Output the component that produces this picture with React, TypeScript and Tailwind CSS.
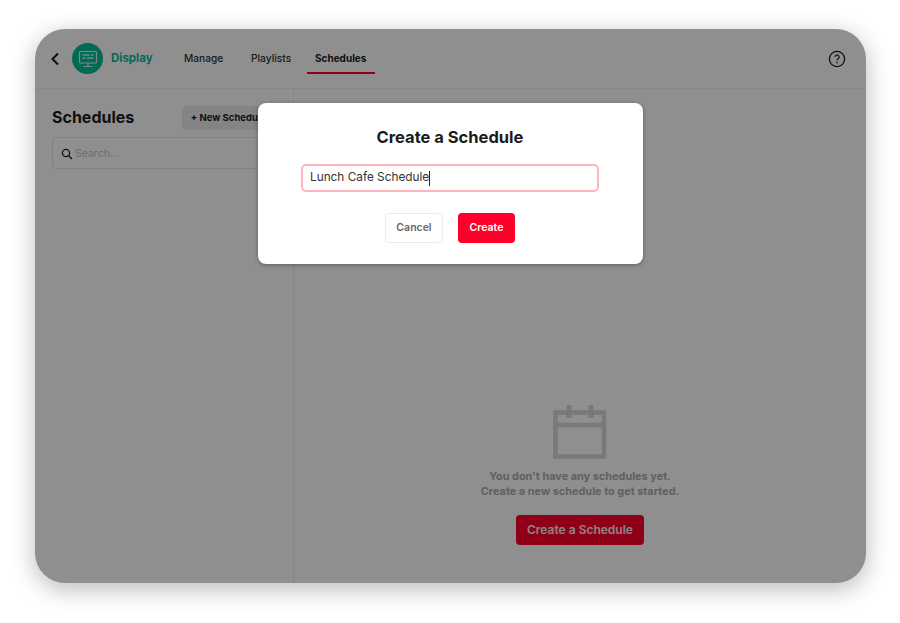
const font = "font-['Inter','Liberation_Sans',sans-serif]";

function CalendarIcon() {
  return (
    <svg width="54" height="54" viewBox="0 0 54 54" fill="none" stroke="#d8d8d8" strokeWidth="4.5">
      <rect x="2.5" y="7.5" width="48.5" height="44" />
      <path d="M2 20h49" />
      <path d="M16 0v13M38 0v13" strokeWidth="5" />
    </svg>
  );
}

function DisplayIcon() {
  return (
    <svg width="20" height="20" viewBox="0 0 20 20" fill="none" stroke="#d8f5ee" strokeWidth="1.2">
      <rect x="1.5" y="2.5" width="17" height="11.5" rx="1" />
      <path d="M10 14v3M5.5 17.5h9" />
      <path d="M4.5 6h7M13 6h2.5M4.5 9h3M9 9h6.5" strokeWidth="1.5" />
    </svg>
  );
}

function App() {
  return (
    <div className={`w-[900px] h-[623px] bg-white pt-[29px] pl-[35px] ${font}`}>
      <div className="relative w-[831px] h-[554px] rounded-[30px] overflow-hidden bg-white flex flex-col shadow-[0_6px_24px_rgba(0,0,0,0.28)]">
        <header className="h-[60px] shrink-0 border-b border-[#f0f0f0] flex items-center pl-[15px] pr-[20px]">
          <svg width="10" height="14" viewBox="0 0 10 14" fill="none" stroke="#1b1b1b" strokeWidth="2">
            <path d="M8 1.5 2.5 7 8 12.5" />
          </svg>
          <div className="w-[31px] h-[31px] ml-[12px] rounded-full bg-[#05bc98] flex items-center justify-center">
            <DisplayIcon />
          </div>
          <span className="ml-[8px] w-[42px] text-[11.5px] font-bold text-[#05bc98]">Display</span>
          <nav className="ml-[31px] flex items-center h-full text-[10.2px] font-medium text-[#333]">
            <span className="w-[40px]">Manage</span>
            <span className="ml-[27px] w-[39px]">Playlists</span>
            <span className="relative ml-[25px] w-[52px] text-[10px] font-bold text-[#1b1b1b] h-full flex items-center">
              Schedules
              <span className="absolute left-[-8px] right-[-8px] bottom-[14px] h-[2px] bg-[#ff002b]" />
            </span>
          </nav>
          <svg className="ml-auto" width="18" height="18" viewBox="0 0 18 18" fill="none" stroke="#1b1b1b">
            <circle cx="9" cy="9" r="7.6" strokeWidth="1.3" />
            <path d="M6.9 7a2.1 2.1 0 1 1 3.2 1.8c-.7.4-1.1.8-1.1 1.6" strokeWidth="1.2" />
            <circle cx="9" cy="12.6" r=".8" fill="#1b1b1b" stroke="none" />
          </svg>
        </header>

        <div className="flex flex-1 min-h-0">
          <aside className="w-[259px] shrink-0 border-r border-[#f0f0f0] pl-[17px] pr-[18px] pt-[17px]">
            <div className="flex items-center justify-between h-[24px]">
              <h2 className="text-[16px] -mt-[2px] font-bold text-[#1b1b1b]">Schedules</h2>
              <button className="w-[93px] h-[24px] rounded bg-[#ececec] text-[9.5px] font-bold text-[#1b1b1b]">
                + New Schedule
              </button>
            </div>
            <div className="mt-[7px] h-[32px] pt-px rounded border border-[#e4e4e4] flex items-center pl-[8px] gap-[2px]">
              <svg width="12" height="12" viewBox="0 0 12 12" fill="none" stroke="#222" strokeWidth="1.3">
                <circle cx="5" cy="5" r="3.6" />
                <path d="m7.7 7.7 3.3 3.3" />
              </svg>
              <span className="text-[10.5px] text-[#c4c4c4]">Search...</span>
            </div>
          </aside>

          <main className="flex-1 flex flex-col items-center pt-[316px]">
            <CalendarIcon />
            <p className="mt-[10px] text-center text-[10.9px] leading-[15px] font-bold text-[#acacac]">
              You don't have any schedules yet.
              <br />
              Create a new schedule to get started.
            </p>
            <button className="mt-[16px] w-[128px] h-[30px] rounded bg-[#ff002b] text-[12px] font-semibold text-[#ffe8ea]">
              Create a Schedule
            </button>
          </main>
        </div>

        <div className="absolute inset-0 bg-black/[0.44]" />

        <div className="absolute left-[222.5px] top-[74px] w-[385px] h-[161px] rounded-lg bg-white shadow-[0_1px_4px_rgba(0,0,0,0.35)] flex flex-col items-center pt-[24px]">
          <h1 className="text-[16.5px] leading-[21px] font-bold text-[#1b1b1b]">Create a Schedule</h1>
          <div className="mt-[16px] w-[298px] h-[28px] rounded-[5px] border-2 border-[#ffb3ba] flex items-center pl-[7px] text-[11.8px] text-[#333]">
            Lunch Cafe Schedule
            <span className="w-px h-[15px] bg-[#222]" />
          </div>
          <div className="mt-[21px] flex gap-[15px]">
            <button className="w-[58px] h-[30px] rounded border border-[#ececec] bg-white text-[10.5px] font-semibold text-[#666]">
              Cancel
            </button>
            <button className="w-[57px] h-[30px] rounded bg-[#ff002b] text-[10.5px] font-semibold text-white">
              Create
            </button>
          </div>
        </div>
      </div>
    </div>
  );
}

export default App;
